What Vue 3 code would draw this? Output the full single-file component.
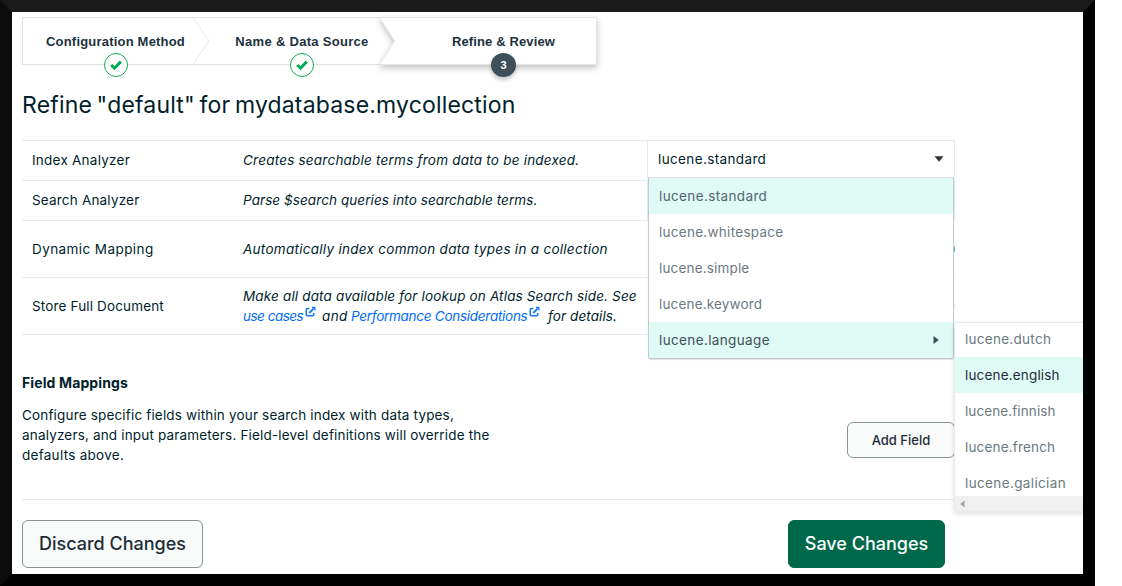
<script setup>
const steps = [
  { label: 'Configuration Method', done: true, cls: 's1' },
  { label: 'Name & Data Source', done: true, cls: 's2' },
  { label: 'Refine & Review', done: false, cls: 's3' },
]
const analyzers = [
  { name: 'lucene.standard', cls: 'hl w4' },
  { name: 'lucene.whitespace', cls: 'w3' },
  { name: 'lucene.simple', cls: 'w2' },
  { name: 'lucene.keyword', cls: 'w2' },
  { name: 'lucene.language', cls: 'hl open w4' },
]
const languages = [
  { name: 'dutch', cls: 'w3' },
  { name: 'english', cls: 'picked w2' },
  { name: 'finnish', cls: 'w1' },
  { name: 'french', cls: 'w2' },
  { name: 'galician', cls: 'w4' },
]
</script>

<template>
  <div class="frame">
    <main class="page">
      <div class="stepper">
        <svg class="shape" width="600" height="64" viewBox="0 0 600 64">
          <path d="M358 .5H.5v47H358" fill="#fff" stroke="#dddfe2" />
          <path d="M171 .5l16 23.5-16 23.5" fill="none" stroke="#e7e9eb" />
          <path class="active" d="M357.500 .5H574.500V47.500H357.500L372.500 24Z" fill="#fff" stroke="#e3e5e8" />
        </svg>
        <div v-for="(s, i) in steps" :key="s.label" class="step" :class="s.cls">
          <span class="step-label">{{ s.label }}</span>
          <span class="badge" :class="{ done: s.done }">
            <svg v-if="s.done" width="14" height="12" viewBox="0 0 14 12">
              <path d="M2.200 6l3.300 3.200 6.300-6.600" fill="none" stroke="#00ab55" stroke-width="3" />
            </svg>
            <template v-else>{{ i + 1 }}</template>
          </span>
        </div>
      </div>

      <h1>Refine "default" for mydatabase.mycollection</h1>

      <section class="table">
        <div class="row">
          <div class="name n1">Index Analyzer</div>
          <div class="desc d1">Creates searchable terms from data to be indexed.</div>
          <div class="cell select">
            <span class="value w4">lucene.standard</span>
            <svg width="10" height="6" viewBox="0 0 10 6"><path d="M.5 .3h9L5 5.700z" fill="#303334" /></svg>
            <div class="menu">
              <div v-for="a in analyzers" :key="a.name" class="item" :class="a.cls">
                <span>{{ a.name }}</span>
                <svg v-if="a.name === 'lucene.language'" width="6" height="10" viewBox="0 0 6 10"><path d="M.5 1v8L5.800 5z" fill="#3d4f58" /></svg>
              </div>
            </div>
            <div class="submenu">
              <div class="list">
                <div v-for="l in languages" :key="l.name" class="item" :class="l.cls"><span>lucene.{{ l.name }}</span></div>
              </div>
              <div class="scroll"><svg width="5" height="8" viewBox="0 0 5 8"><path d="M4.500 .3v7.400L.3 4z" fill="#a3a3a3" /></svg></div>
            </div>
          </div>
        </div>
        <div class="row">
          <div class="name n2">Search Analyzer</div>
          <div class="desc d2">Parse $search queries into searchable terms.</div>
          <div class="cell side"></div>
        </div>
        <div class="row tall">
          <div class="name n3">Dynamic Mapping</div>
          <div class="desc d3">Automatically index common data types in a collection</div>
          <div class="cell end"><i class="toggle on"></i></div>
        </div>
        <div class="row tall">
          <div class="name n4">Store Full Document</div>
          <div class="desc">
            <div class="d4">Make all data available for lookup on Atlas Search side. See</div>
            <div class="linkline">
              <span class="link first">
                <a class="l1">use cases</a>
                <svg class="ext" width="12" height="12" viewBox="0 0 12 12"><path d="M4.500 2.500H2.300q-1 0-1 1v5.200q0 1 1 1h5.400q1 0 1-1V7" fill="none" stroke="#1a7cf0" stroke-width="1.600" /><path d="M4.200 7l4-4" stroke="#1a7cf0" stroke-width="1.800" /><path d="M6.200 .8h4.300v4.300z" fill="#1a7cf0" /></svg>
              </span>
              <span class="and">and</span>
              <span class="link second">
                <a class="l2">Performance Considerations</a>
                <svg class="ext" width="12" height="12" viewBox="0 0 12 12"><path d="M4.500 2.500H2.300q-1 0-1 1v5.200q0 1 1 1h5.400q1 0 1-1V7" fill="none" stroke="#1a7cf0" stroke-width="1.600" /><path d="M4.200 7l4-4" stroke="#1a7cf0" stroke-width="1.800" /><path d="M6.200 .8h4.300v4.300z" fill="#1a7cf0" /></svg>
              </span>
              <span class="fd">for details.</span>
            </div>
          </div>
          <div class="cell end"><i class="toggle"></i></div>
        </div>
      </section>

      <section class="mappings">
        <div>
          <h2>Field Mappings</h2>
          <p>
            Configure specific fields within your search index with data types,<br />
            analyzers, and input parameters. Field-level definitions will override the<br />
            <span class="w3">defaults above.</span>
          </p>
        </div>
        <button class="btn add">Add Field</button>
      </section>

      <footer>
        <button class="btn big">Discard Changes</button>
        <button class="btn big save">Save Changes</button>
      </footer>
    </main>
  </div>
</template>

<style>
body { background: #fff; }
</style>

<style scoped>
.frame {
  box-sizing: border-box;
  width: 1095px;
  height: 586px;
  overflow: hidden;
  border: 12px solid;
  border-color: #1a1a1a #000 #000 #0c0c0c;
  background: #fff;
  color: #001e2b;
  font: 13.5px/20px Inter, "Liberation Sans", sans-serif;
  white-space: nowrap;
}
.page { width: 933px; padding: 5px 0 0 10px; }
.stepper { position: relative; display: flex; width: 575px; height: 48px; }
.shape { position: absolute; left: 0; top: 0; overflow: visible; }
.active { filter: drop-shadow(0 3px 3px rgba(0, 0, 0, .24)); }
.step {
  position: relative;
  display: flex;
  flex-direction: column;
  align-items: center;
  padding-top: 15px;
  font: bold 13px/20px "Liberation Sans", Arial, sans-serif;
  color: #21313c;
}
.s1 { width: 187px; letter-spacing: .2px; }
.s2 { width: 186px; letter-spacing: .3px; }
.s3 { width: 187px; margin-left: 15px; letter-spacing: .12px; }
.badge {
  display: flex;
  flex: none;
  align-items: center;
  justify-content: center;
  box-sizing: border-box;
  width: 25px;
  height: 24px;
  margin-top: 1px;
  border-radius: 50%;
  background: #3d4f58;
  color: #fff;
  font-size: 11px;
  box-shadow: 0 3px 4px rgba(0, 0, 0, .22);
}
.badge.done { width: 24px; border: 1px solid #13aa52; background: #fff; box-shadow: none; }
h1 { margin: 24px 0 0; font-size: 23px; line-height: 32px; font-weight: 400; height: 51px; letter-spacing: .17px; word-spacing: -2px; }
.table { border-top: 1px solid #e8eaeb; }
.row {
  display: grid;
  grid-template-columns: 211px 414px 308px;
  box-sizing: border-box;
  height: 40px;
  align-items: center;
  border-bottom: 1px solid #e8eaeb;
}
.tall { height: 57px; }
.name { padding-left: 10px; }
.n1, .n2, .d1, .d2 { padding-bottom: 1px; }
.n1 { letter-spacing: .24px; }
.n2 { letter-spacing: .19px; }
.n3 { letter-spacing: .42px; }
.n4 { letter-spacing: .15px; }
.desc { padding-left: 10px; font-style: italic; }
.d1 { letter-spacing: .22px; }
.d2 { letter-spacing: .08px; }
.d3 { letter-spacing: .28px; }
.d4 { letter-spacing: .16px; }
.w1 { letter-spacing: .1px; }
.w2 { letter-spacing: .17px; }
.w3 { letter-spacing: .28px; }
.w4 { letter-spacing: .37px; }
.cell { box-sizing: border-box; height: 100%; }
.select {
  position: relative;
  align-self: start;
  height: 37px;
  border: 1px solid #e8eaeb;
  border-top: 0;
  display: flex;
  align-items: center;
  justify-content: space-between;
  padding: 0 10px;
}
.side { border: 1px solid #e8eaeb; border-width: 0 1px; }
.menu {
  position: absolute;
  z-index: 2;
  left: 0;
  top: 36px;
  box-sizing: border-box;
  width: 306px;
  height: 182px;
  border: 1px solid #c3c8ca;
  border-top-color: #dfe2e3;
  border-radius: 0 0 3px 3px;
  background: #fff;
  box-shadow: 0 1px 1px rgba(0, 0, 0, .12);
}
.item {
  box-sizing: border-box;
  height: 36px;
  display: flex;
  align-items: center;
  justify-content: space-between;
  padding: 0 14px 0 10px;
  color: #6b7980;
}
.hl { background: #e0faf5; color: #536770; }
.open { color: #3d4f58; }
.submenu {
  position: absolute;
  z-index: 3;
  left: 306px;
  top: 181px;
  box-sizing: border-box;
  width: 180px;
  height: 190px;
  border: 1px solid #e8eaeb;
  border-radius: 3px;
  background: #fff;
  box-shadow: 0 2px 5px rgba(0, 0, 0, .13);
}
.list { height: 173px; overflow: hidden; }
.list .item:first-child { height: 34px; padding-bottom: 2px; }
.item.picked { background: #e0faf5; color: #1c2d38; }
.scroll { height: 15px; background: #f0f0f0; display: flex; align-items: center; padding-left: 5px; }
.end { display: flex; align-items: center; justify-content: flex-end; }
.toggle { width: 24px; height: 14px; border-radius: 7px; background: #e8eaeb; }
.on { background: #1c9fd0; }
.linkline { display: flex; align-items: center; }
.link { display: flex; align-items: center; }
.first { width: 79px; }
.and { width: 29px; letter-spacing: .4px; }
.second { width: 197px; }
.l1 { letter-spacing: -.5px; }
.l2 { letter-spacing: -.27px; }
.fd { letter-spacing: .1px; }
a { color: #016bf8; }
.ext { flex: none; margin: -8px 0 0 2px; }
.mappings { display: flex; justify-content: space-between; height: 165px; box-sizing: border-box; padding-top: 38px; border-bottom: 1px solid #e8eaeb; }
h2 { margin: 0 0 12px; font-size: 14px; line-height: 20px; font-weight: 700; letter-spacing: .12px; }
p { margin: 0; letter-spacing: .17px; }
.btn {
  box-sizing: border-box;
  padding: 0;
  border: 1px solid #889397;
  border-radius: 6px;
  background: #f9fbfa;
  color: #1c2d38;
  font-family: inherit;
  font-weight: 500;
}
.add { width: 108px; height: 36px; margin-top: 49px; font-size: 13px; }
footer { display: flex; justify-content: space-between; padding: 20px 10px 0 0; }
.big { width: 181px; height: 48px; padding-bottom: 2px; font-size: 18px; }
.save { width: 157px; background: #00684a; border-color: #00684a; color: #fff; }
</style>
